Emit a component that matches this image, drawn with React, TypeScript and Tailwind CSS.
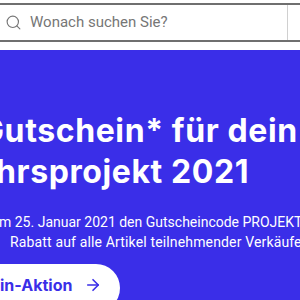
import { Search, ArrowRight } from "lucide-react";

export default function App() {
  return (
    <div className="w-[300px] h-[300px] overflow-hidden bg-white font-['Inter',sans-serif]">
      <div className="pt-[3px]">
        <div className="flex h-[39px] border-y-2 border-[#6f6f6f]">
          <div className="flex flex-1 items-center gap-[8px] pl-[5px]">
            <Search size={17} strokeWidth={1.6} className="text-[#767676]" />
            <span className="font-['Roboto',sans-serif] text-[15px] text-[#767676]">
              Wonach suchen Sie?
            </span>
          </div>
          <div className="w-[13px] border-l border-[#d0d0d0]" />
        </div>
      </div>

      <div className="mt-[8px] h-[250px] overflow-hidden bg-[#3a2ee8] pt-[60px] text-white">
        <div className="text-[32px] font-bold leading-[41px] tracking-[0.6px] whitespace-nowrap">
          <div className="-ml-[20px]">Gutschein* für dein</div>
          <div className="-ml-[4px]">hrsprojekt 2021</div>
        </div>

        <div className="mt-[20px] font-['Roboto',sans-serif] text-[14px] leading-[20px] whitespace-nowrap">
          <div className="-ml-[1px]">m 25. Januar 2021 den Gutscheincode PROJEKT</div>
          <div className="pl-[10px] tracking-[0.15px]">Rabatt auf alle Artikel teilnehmender Verkäufer</div>
        </div>

        <div className="mt-[12px] -ml-[30px] flex h-[48px] w-[150px] items-start rounded-full bg-white pt-[8px] pl-[30px] text-[16px] font-bold leading-[26px] text-[#3a2ee8]">
          <span>in-Aktion</span>
          <ArrowRight size={18} strokeWidth={2.2} className="ml-[12px] mt-[4px]" />
        </div>
      </div>
    </div>
  );
}
